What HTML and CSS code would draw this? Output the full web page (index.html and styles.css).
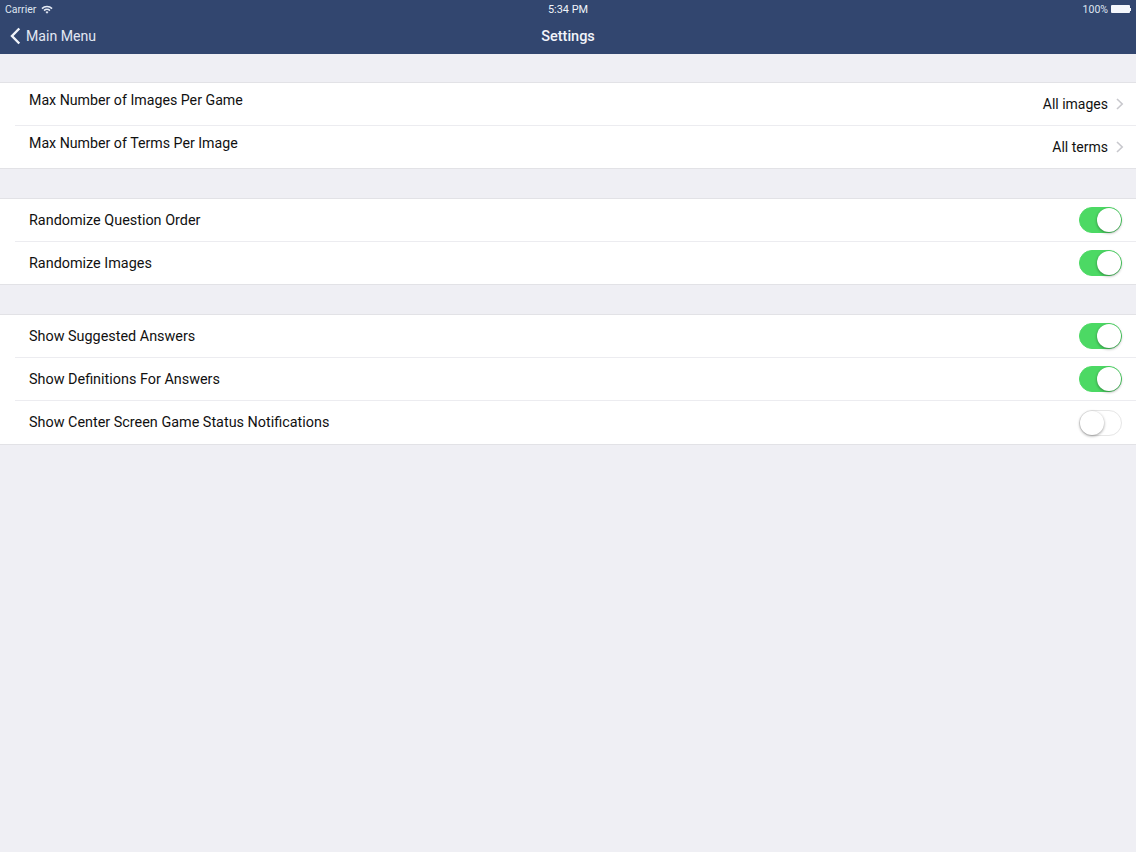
FILE: index.html
```html
<!DOCTYPE html>
<html lang="en">
<head>
    <meta charset="UTF-8">
    <title>Settings</title>
    <link rel="stylesheet" href="styles.css">
</head>
<body>
    <header class="topbar">
        <div class="status">
            <div class="status-left">
                <span>Carrier</span>
                <svg class="wifi" width="12" height="9" viewBox="0 0 12 9">
                    <path d="M0.4 3 A8 8 0 0 1 11.6 3 L10.5 4.2 A6.4 6.4 0 0 0 1.5 4.2 Z" fill="#e6ebf5"/>
                    <path d="M2.5 5 A5 5 0 0 1 9.5 5 L8.4 6.2 A3.4 3.4 0 0 0 3.6 6.2 Z" fill="#e6ebf5"/>
                    <path d="M4.5 7 A2.2 2.2 0 0 1 7.5 7 L6 8.7 Z" fill="#e6ebf5"/>
                </svg>
            </div>
            <div class="status-time">5:34 PM</div>
            <div class="status-right">
                <span>100%</span>
                <span class="battery"></span>
                <span class="battery-tip"></span>
            </div>
        </div>
        <nav class="navbar">
            <a class="back">
                <svg width="11" height="18" viewBox="0 0 11 18">
                    <path d="M9.3 1.5 L2 9 L9.3 16.5" fill="none" stroke="#f1f4fa" stroke-width="2.4"/>
                </svg>
                <span>Main Menu</span>
            </a>
            <div class="title">Settings</div>
        </nav>
    </header>

    <section class="group first">
        <div class="row">
            <span class="label raised">Max Number of Images Per Game</span>
            <span class="value">All images</span>
            <svg class="chevron" width="8" height="12" viewBox="0 0 8 12">
                <path d="M1 1 L6.2 6 L1 11" fill="none" stroke="#c8c8cd" stroke-width="1.6"/>
            </svg>
        </div>
        <div class="row">
            <span class="label raised">Max Number of Terms Per Image</span>
            <span class="value">All terms</span>
            <svg class="chevron" width="8" height="12" viewBox="0 0 8 12">
                <path d="M1 1 L6.2 6 L1 11" fill="none" stroke="#c8c8cd" stroke-width="1.6"/>
            </svg>
        </div>
    </section>

    <section class="group">
        <div class="row">
            <span class="label">Randomize Question Order</span>
            <span class="switch on"><span class="knob"></span></span>
        </div>
        <div class="row">
            <span class="label">Randomize Images</span>
            <span class="switch on"><span class="knob"></span></span>
        </div>
    </section>

    <section class="group">
        <div class="row">
            <span class="label">Show Suggested Answers</span>
            <span class="switch on"><span class="knob"></span></span>
        </div>
        <div class="row">
            <span class="label">Show Definitions For Answers</span>
            <span class="switch on"><span class="knob"></span></span>
        </div>
        <div class="row">
            <span class="label">Show Center Screen Game Status Notifications</span>
            <span class="switch"><span class="knob"></span></span>
        </div>
    </section>
</body>
</html>
```

FILE: styles.css
```css
* {
    box-sizing: border-box;
}
html, body {
    height: 100%;
}
body {
    margin: 0;
    background-color: #efeff4;
    font-family: Roboto, "Liberation Sans", Arial, sans-serif;
    font-size: 14.4px;
    color: #111;
    overflow: hidden;
}
.topbar {
    height: 54px;
    background-color: #32466f;
    color: #f1f4fa;
}
.status {
    display: grid;
    grid-template-columns: 1fr auto 1fr;
    align-items: center;
    height: 18px;
    padding: 0 5px;
    font-size: 10.5px;
    color: #dfe5f1;
}
.status-left {
    display: flex;
    align-items: center;
    gap: 5px;
}
.status-time {
    font-size: 10.9px;
    color: #f1f4fa;
}
.status-right {
    display: flex;
    align-items: center;
    justify-content: flex-end;
}
.battery {
    width: 19px;
    height: 8px;
    margin-left: 3px;
    background-color: #f4f6fb;
    border-radius: 1px;
}
.battery-tip {
    width: 1px;
    height: 3px;
    background-color: #f4f6fb;
}
.navbar {
    display: grid;
    grid-template-columns: 1fr auto 1fr;
    align-items: center;
    height: 36px;
    padding: 0 10px;
    font-size: 14.5px;
}
.back {
    display: flex;
    align-items: center;
    gap: 5px;
    font-size: 14.1px;
    color: #e3e8f3;
}
.title {
    font-weight: 500;
    color: #f1f4fa;
}
.group {
    margin-top: 29px;
    background-color: #fff;
    border-top: 1px solid #e2e2e6;
    border-bottom: 1px solid #e2e2e6;
    padding-left: 15px;
}
.group.first {
    margin-top: 28px;
}
.row {
    display: flex;
    align-items: center;
    height: 43px;
    padding-left: 14px;
    padding-right: 14px;
    border-bottom: 1px solid #ececf0;
}
.row:last-child {
    height: 42px;
    border-bottom: none;
}
.group:last-child .row:last-child {
    height: 43px;
}
.label {
    flex: 1;
}
.label.raised {
    padding-bottom: 8px;
    font-size: 14.2px;
}
.value {
    margin-right: 8px;
    font-size: 14px;
}
.chevron {
    margin-right: -2px;
}
.switch {
    position: relative;
    width: 43px;
    height: 26px;
    border-radius: 13px;
    background-color: #fff;
    border: 1px solid #e6e6e6;
}
.switch.on {
    background-color: #4cd964;
    border-color: #4cd964;
}
.knob {
    position: absolute;
    top: 0;
    left: 0;
    width: 24px;
    height: 24px;
    border-radius: 50%;
    background-color: #fff;
    box-shadow: 0 1px 3px rgba(0, 0, 0, 0.4);
}
.switch.on .knob {
    left: 17px;
}
```
